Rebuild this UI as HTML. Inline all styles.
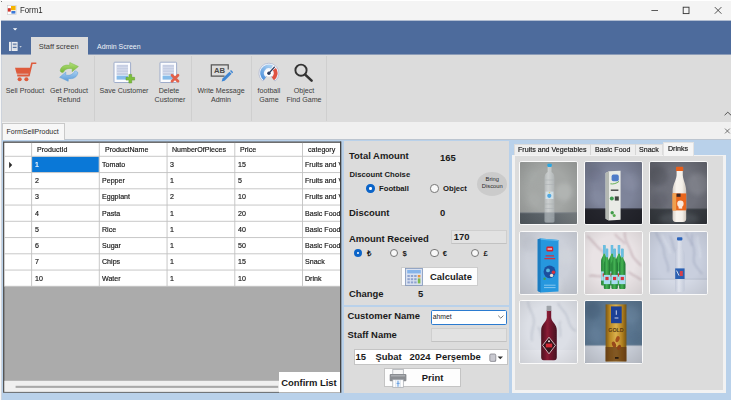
<!DOCTYPE html>
<html><head><meta charset="utf-8"><title>Form1</title>
<style>
*{box-sizing:border-box;margin:0;padding:0}
html,body{width:731px;height:400px;overflow:hidden}
body{position:relative;background:#b9d1ea;font-family:"Liberation Sans",sans-serif;color:#222}
.a{position:absolute;white-space:nowrap}
.t{position:absolute;white-space:nowrap;line-height:10px;height:10px}
.rb{font-size:7.5px;color:#3c3c3c;text-align:center;transform:translateX(-50%) scaleX(.947)}
.sep{position:absolute;top:56px;height:65px;width:1px;background:#cfcfcf}
.b{font-weight:bold;font-size:9.45px;color:#1a1a1a;line-height:12px;height:12px}
.sb{font-weight:bold;font-size:7.7px;color:#1a1a1a;line-height:10px;height:10px}
.g{font-size:7.7px;color:#111;-webkit-text-stroke:0.18px #222;line-height:10px;height:10px;transform:scaleX(.922);transform-origin:0 50%}
.radio{position:absolute;width:8.4px;height:8.4px;border-radius:50%;border:0.9px solid #777;background:#f8f8f8;margin:-0.2px}
.radio.on{border:3px solid #0b64c8;background:#fff}
.pic{position:absolute;width:59.2px;height:64px;border:1px solid #fafafa;border-radius:2.2px;overflow:hidden;background:#ccc}
.pic svg{position:absolute;left:0;top:0;width:57.2px;height:62px;display:block}
</style></head><body>

<div class="a" style="left:0;top:0;width:1.2px;height:400px;background:#f7f7f7;z-index:50"></div><div class="a" style="left:1.2px;top:54.5px;width:0.5px;height:345.5px;background:#cdd3dc;z-index:50"></div>
<!-- title bar -->
<div class="a" style="left:0;top:0;width:731px;height:21px;background:#f4f4f4;border-top:1px solid #fff;border-left:1px solid #fff"></div>
<svg class="a" style="left:7px;top:5px" width="10" height="10" viewBox="0 0 10 10">
 <rect x="0.5" y="0.5" width="8.6" height="8.8" fill="#fff" stroke="#c8c8c8" stroke-width="0.6"/>
 <rect x="4" y="1" width="4.6" height="4.2" fill="#f5b400"/>
 <rect x="0.8" y="3.2" width="3" height="3.4" fill="#d0342c"/>
 <rect x="4.4" y="6" width="4" height="2.6" fill="#3b78d8"/>
</svg>
<div class="t" style="left:19.8px;top:5.2px;font-size:8.7px;color:#2a2a2a;transform:scaleX(.9);transform-origin:0 50%">Form1</div><div class="a" style="left:1.2px;top:1.1px;width:1px;height:1px;background:#777;z-index:51"></div>
<svg class="a" style="left:645px;top:3px" width="82" height="15" viewBox="0 0 82 15">
 <path d="M6.4 7.5h6.6" stroke="#333" stroke-width="0.8" fill="none"/>
 <rect x="38.2" y="4.2" width="5.8" height="6.4" stroke="#333" stroke-width="0.9" fill="none"/>
 <path d="M69.8 4.1l6.6 6.6M76.4 4.1l-6.6 6.6" stroke="#333" stroke-width="0.85" fill="none"/>
</svg>

<!-- blue band -->
<div class="a" style="left:1px;top:20px;width:730px;height:1px;background:#b1bdd1"></div>
<div class="a" style="left:1px;top:20.6px;width:730px;height:33.9px;background:#4d6b9c"></div>
<svg class="a" style="left:12px;top:26px" width="8" height="6" viewBox="0 0 8 6"><path d="M0.900 2.300h4.400l-2.200 2.300z" fill="#fff"/></svg>
<svg class="a" style="left:8px;top:41px" width="16" height="11" viewBox="0 0 16 11">
 <rect x="1" y="0.900" width="8.600" height="9.100" fill="#e9ebef"/>
 <path d="M3.400 0.900v9.100" stroke="#5a76a4" stroke-width="0.700"/>
 <path d="M4.800 3.100h3.800M4.800 6.400h3.800" stroke="#5a76a4" stroke-width="1.100"/>
 <path d="M4.800 4.600h3.800M4.800 8h3.800" stroke="#c4cad6" stroke-width="0.700"/>
 <path d="M11.400 5.200h2.400l-1.200 1.300z" fill="#e9ebef"/>
</svg>
<div class="a" style="left:30.8px;top:36.8px;width:57.6px;height:18.4px;background:#dcdcdc;z-index:2"></div>
<div class="t" style="left:38.7px;top:42px;font-size:7.5px;color:#3a3a3a;z-index:3">Staff screen</div>
<div class="t" style="left:97px;top:42px;font-size:6.95px;color:#f0f3f8">Admin Screen</div>

<!-- ribbon -->
<div class="a" style="left:1px;top:54px;width:730px;height:68px;background:#dcdcdc;border-top:1px solid #8c9cb8"></div>
<div class="sep" style="left:94px"></div>
<div class="sep" style="left:191px"></div>
<div class="sep" style="left:251px"></div>
<div class="sep" style="left:326px"></div>
<div id="icons">
<!-- cart -->
<svg class="a" style="left:13px;top:61px" width="25" height="22" viewBox="0 0 25 22">
 <g fill="#de5b3c" stroke="none">
 <path d="M2 6.700h15.700l-1.600 6.100h-12.400z"/>
 <path d="M4 13.500h12l-.4 1.900h-11.200z"/>
 <circle cx="6.650" cy="18.200" r="2.050"/><circle cx="13.400" cy="18.200" r="2.050"/>
 </g>
 <path d="M15.800 15.300L18.900 2.300h4.400" fill="none" stroke="#de5b3c" stroke-width="1.600"/>
</svg>
<!-- refresh -->
<svg class="a" style="left:58px;top:61px" width="22" height="22" viewBox="0 0 22 22">
 <defs><linearGradient id="rg" x1="0" y1="0" x2="0" y2="1"><stop offset="0" stop-color="#b4e27a"/><stop offset="1" stop-color="#74b436"/></linearGradient>
 <linearGradient id="rb" x1="0" y1="0" x2="0" y2="1"><stop offset="0" stop-color="#a9d0f2"/><stop offset="1" stop-color="#5b9bd8"/></linearGradient></defs>
 <path d="M2.200 9.600c.6-4.200 5-6.400 9.400-5.200l.2-2.900 8.600 4-6.300 5.200 .2-2.800c-2.700-1-6.800-.6-9 3.400-.6.800-3.300-.2-3.100-1.700z" fill="url(#rg)" stroke="#7ab648" stroke-width="0.500"/>
 <path d="M19.800 12c-.6 4.200-5 6.600-9.400 5.400l-.2 2.900-8.600-4 6.300-5.200-.2 2.800c2.700 1 6.800.4 9-3.600.6-.8 3.300.2 3.100 1.700z" fill="url(#rb)" stroke="#5c9cd8" stroke-width="0.500"/>
</svg>
<!-- save customer -->
<svg class="a" style="left:113px;top:61px" width="23" height="23" viewBox="0 0 23 23">
 <rect x="1" y="1.200" width="16.600" height="20.300" rx="0.800" fill="#fbfcfe" stroke="#9fadcb" stroke-width="1"/>
 <rect x="3.600" y="3.800" width="11.400" height="10.200" fill="#c6cee3"/>
 <path d="M3.600 6.300h11.400M3.600 8.900h11.400M3.600 11.500h11.400" stroke="#e4e8f3" stroke-width="0.600"/>
 <rect x="3.600" y="14.600" width="11.400" height="4" fill="#86bcea"/>
 <path d="M15.900 13.400h2.800v2.900h2.900v2.800h-2.900v2.900h-2.800v-2.900h-2.900v-2.800h2.900z" fill="#7dc03c" stroke="#5c9a28" stroke-width="0.500"/>
</svg>
<!-- delete customer -->
<svg class="a" style="left:159px;top:61px" width="23" height="23" viewBox="0 0 23 23">
 <rect x="1" y="1.200" width="16.600" height="20.300" rx="0.800" fill="#fbfcfe" stroke="#9fadcb" stroke-width="1"/>
 <rect x="3.600" y="3.800" width="11.400" height="10.200" fill="#c6cee3"/>
 <path d="M3.600 6.300h11.400M3.600 8.900h11.400M3.600 11.500h11.400" stroke="#e4e8f3" stroke-width="0.600"/>
 <rect x="3.600" y="14.600" width="11.400" height="4" fill="#86bcea"/>
 <path d="M13 14.200l6 6M19 14.200l-6 6" stroke="#e2614b" stroke-width="2.700" stroke-linecap="round" fill="none"/>
</svg>
<!-- write message -->
<svg class="a" style="left:209.5px;top:62.8px" width="23.500" height="20.700" viewBox="0 0 25 22">
 <path d="M15.500 13.900h-14.100v-11.900h18v5" fill="none" stroke="#555" stroke-width="1.300"/>
 <text x="10.200" y="10.900" font-family="Liberation Sans, sans-serif" font-weight="bold" font-size="8.200" text-anchor="middle" fill="#4a4a4a">AB</text>
 <path d="M12.400 19.800l.9-3.200 7.400-7.400 2.300 2.300-7.400 7.400z" fill="#3e86d4"/>
 <path d="M21.300 8.600l1.100-1.100 2.300 2.300-1.100 1.100z" fill="#3e86d4"/>
</svg>
<!-- gauge -->
<svg class="a" style="left:258px;top:62px" width="22" height="22" viewBox="0 0 22 22">
 <defs><linearGradient id="gb1" x1="0" y1="1" x2="0.6" y2="0"><stop offset="0" stop-color="#3f88da"/><stop offset="1" stop-color="#a6cdf0"/></linearGradient></defs>
 <path d="M4.74 19.08A10 10 0 1 1 17.06 19.08L12.93 13.8A3.3 3.3 0 0 0 8.87 13.8z" fill="#f3f5fa" stroke="#a7b1cd" stroke-width="0.700"/>
 <path d="M5.79 18.24A8.7 8.7 0 0 1 14.98 3.52L13.2 6.87A4.9 4.9 0 0 0 8.02 15.16z" fill="url(#gb1)"/>
 <path d="M17.94 6.09A8.7 8.7 0 0 1 16.01 18.24L13.78 15.16A4.9 4.9 0 0 0 14.86 8.32z" fill="#df5241"/>
 <circle cx="10.9" cy="11.2" r="3.400" fill="#fff"/>
 <path d="M10.9 11.2L16.39 5.11" stroke="#2b3a5c" stroke-width="1.300" stroke-linecap="round"/>
 <circle cx="10.9" cy="11.2" r="1.700" fill="#2b3a5c"/>
</svg>
<!-- magnifier -->
<svg class="a" style="left:293px;top:62px" width="21" height="21" viewBox="0 0 21 21">
 <circle cx="8" cy="8.200" r="5.600" fill="none" stroke="#333" stroke-width="1.900"/>
 <path d="M12.200 12.600l6.400 6" stroke="#333" stroke-width="2.600" stroke-linecap="round"/>
</svg>
</div>

<div class="t rb" style="left:25px;top:85.5px">Sell Product</div>
<div class="t rb" style="left:68.5px;top:85.5px">Get Product</div>
<div class="t rb" style="left:68.5px;top:95.1px">Refund</div>
<div class="t rb" style="left:123.7px;top:85.5px">Save Customer</div>
<div class="t rb" style="left:169.3px;top:85.5px">Delete</div>
<div class="t rb" style="left:169.6px;top:95.1px">Customer</div>
<div class="t rb" style="left:221.3px;top:85.5px">Write Message</div>
<div class="t rb" style="left:221.3px;top:95.1px">Admin</div>
<div class="t rb" style="left:268.7px;top:85.5px">football</div>
<div class="t rb" style="left:268.5px;top:95.1px">Game</div>
<div class="t rb" style="left:303.7px;top:85.5px">Object</div>
<div class="t rb" style="left:303.5px;top:95.1px">Find Game</div>
<svg class="a" style="left:722px;top:109px" width="9" height="8" viewBox="0 0 9 8"><path d="M2.6 6.2l3.2-3 3.2 3" stroke="#444" stroke-width="0.9" fill="none"/></svg>

<!-- mdi tab strip -->
<div class="a" style="left:1px;top:122px;width:730px;height:17px;background:#f0f0f0"></div>
<div class="a" style="left:1px;top:139px;width:730px;height:0.8px;background:#bcc5d0"></div>
<div class="a" style="left:1.5px;top:123px;width:63px;height:16.5px;background:#f7f7f7;border:1px solid #c9c9c9;border-bottom:none"></div>
<div class="t" style="left:6.5px;top:126.8px;font-size:7px;color:#2a2a2a">FormSellProduct</div>
<svg class="a" style="left:722px;top:126px" width="9" height="9" viewBox="0 0 9 9"><path d="M3 2.6l4.8 4.8M7.8 2.6L3 7.4" stroke="#555" stroke-width="0.8" fill="none"/></svg>

<!-- GRID placeholder -->
<div class="a" style="left:3.0px;top:141.0px;width:339px;height:252px;overflow:hidden" id="grid">
<svg class="a" style="left:0;top:0" width="339" height="252" viewBox="0 0 339 252"><rect x="0.0" y="0.5" width="338.2" height="251.1" fill="#555"/><rect x="337.0" y="0.5" width="1.2" height="251.1" fill="#424242"/><rect x="0.0" y="250.8" width="338.2" height="0.8" fill="#6a6a6a"/><rect x="1.4" y="1.9" width="335.6" height="248.9" fill="#ababab"/><rect x="1.4" y="1.9" width="335.6" height="143.4" fill="#fff"/><rect x="29.05" y="15.75" width="66.8" height="15.35" fill="#0a78d7"/><path d="M1.4 15.3H337.0M1.4 31.55H337.0M1.4 47.8H337.0M1.4 64.05H337.0M1.4 80.3H337.0M1.4 96.55H337.0M1.4 112.8H337.0M1.4 129.05H337.0M1.4 145.3H337.0M28.6 1.9V145.3M96.3 1.9V145.3M164.05 1.9V145.3M231.8 1.9V145.3M299.5 1.9V145.3" stroke="#c2c2c2" stroke-width="0.9" fill="none"/><rect x="1.4" y="239.8" width="274.6" height="11.0" fill="#f0f0f0"/><rect x="12.6" y="244.8" width="262.6" height="2.1" fill="#a9a9a9"/><path d="M6.1 20.83L9.2 24.03L6.1 27.23z" fill="#2a2a2a"/></svg>
<div class="t g" style="left:34.0px;top:4.3px">ProductId</div>
<div class="t g" style="left:101.7px;top:4.3px">ProductName</div>
<div class="t g" style="left:169.45px;top:4.3px">NumberOfPieces</div>
<div class="t g" style="left:237.2px;top:4.3px">Price</div>
<div class="t g" style="left:304.9px;top:4.3px">category</div>
<div class="t g" style="left:31.5px;top:18.93px;color:#fff;-webkit-text-stroke-color:#fff">1</div>
<div class="t g" style="left:99.2px;top:18.93px">Tomato</div>
<div class="t g" style="left:166.95px;top:18.93px">3</div>
<div class="t g" style="left:234.7px;top:18.93px">15</div>
<div class="t g" style="left:302.4px;top:18.93px;width:37.53px;overflow:hidden">Fruits and Vegetables</div>
<div class="t g" style="left:31.5px;top:35.18px">2</div>
<div class="t g" style="left:99.2px;top:35.18px">Pepper</div>
<div class="t g" style="left:166.95px;top:35.18px">1</div>
<div class="t g" style="left:234.7px;top:35.18px">5</div>
<div class="t g" style="left:302.4px;top:35.18px;width:37.53px;overflow:hidden">Fruits and Vegetables</div>
<div class="t g" style="left:31.5px;top:51.43px">3</div>
<div class="t g" style="left:99.2px;top:51.43px">Eggplant</div>
<div class="t g" style="left:166.95px;top:51.43px">2</div>
<div class="t g" style="left:234.7px;top:51.43px">10</div>
<div class="t g" style="left:302.4px;top:51.43px;width:37.53px;overflow:hidden">Fruits and Vegetables</div>
<div class="t g" style="left:31.5px;top:67.68px">4</div>
<div class="t g" style="left:99.2px;top:67.68px">Pasta</div>
<div class="t g" style="left:166.95px;top:67.68px">1</div>
<div class="t g" style="left:234.7px;top:67.68px">20</div>
<div class="t g" style="left:302.4px;top:67.68px;width:37.53px;overflow:hidden">Basic Food</div>
<div class="t g" style="left:31.5px;top:83.93px">5</div>
<div class="t g" style="left:99.2px;top:83.93px">Rice</div>
<div class="t g" style="left:166.95px;top:83.93px">1</div>
<div class="t g" style="left:234.7px;top:83.93px">40</div>
<div class="t g" style="left:302.4px;top:83.93px;width:37.53px;overflow:hidden">Basic Food</div>
<div class="t g" style="left:31.5px;top:100.18px">6</div>
<div class="t g" style="left:99.2px;top:100.18px">Sugar</div>
<div class="t g" style="left:166.95px;top:100.18px">1</div>
<div class="t g" style="left:234.7px;top:100.18px">50</div>
<div class="t g" style="left:302.4px;top:100.18px;width:37.53px;overflow:hidden">Basic Food</div>
<div class="t g" style="left:31.5px;top:116.43px">7</div>
<div class="t g" style="left:99.2px;top:116.43px">Chips</div>
<div class="t g" style="left:166.95px;top:116.43px">1</div>
<div class="t g" style="left:234.7px;top:116.43px">15</div>
<div class="t g" style="left:302.4px;top:116.43px;width:37.53px;overflow:hidden">Snack</div>
<div class="t g" style="left:31.5px;top:132.68px">10</div>
<div class="t g" style="left:99.2px;top:132.68px">Water</div>
<div class="t g" style="left:166.95px;top:132.68px">1</div>
<div class="t g" style="left:234.7px;top:132.68px">10</div>
<div class="t g" style="left:302.4px;top:132.68px;width:37.53px;overflow:hidden">Drink</div>
</div>
<div class="a" style="left:279px;top:372px;width:61px;height:20.7px;background:#fff;border-bottom:0.8px solid #b4b4b4"></div>
<div class="t b" style="left:281.2px;top:376.9px">Confirm List</div>
<!-- MID placeholder -->
<div id="mid">
<!-- panel 1 -->
<div class="a" style="left:344.1px;top:140.5px;width:165.2px;height:164px;background:#dcdcdc"></div>
<div class="t b" style="left:349px;top:149.8px">Total Amount</div>
<div class="t b" style="left:440px;top:151.6px">165</div>
<div class="t sb" style="left:349.5px;top:169.6px">Discount Choise</div>
<div class="radio on" style="left:366.5px;top:184.4px"></div>
<div class="t sb" style="left:379px;top:184.1px">Football</div>
<div class="radio" style="left:430.5px;top:184.4px"></div>
<div class="t sb" style="left:443px;top:184.1px">Object</div>
<div class="a" style="left:476.8px;top:172.2px;width:30.4px;height:23.8px;border-radius:50%;background:#cbcbcb"></div>
<div class="t" style="left:492.3px;top:176.9px;font-size:5.8px;color:#2a2a2a;text-align:center;transform:translateX(-50%);line-height:5px;height:5px">Bring</div>
<div class="t" style="left:492.3px;top:184.1px;font-size:5.8px;color:#2a2a2a;text-align:center;transform:translateX(-50%);line-height:5px;height:5px">Discoun</div>
<div class="t b" style="left:349px;top:206.6px">Discount</div>
<div class="t b" style="left:440px;top:206.6px">0</div>
<div class="t b" style="left:349px;top:232.8px">Amount Received</div>
<div class="a" style="left:451px;top:230px;width:56.3px;height:14px;background:#e2e2e2;border:1px solid #cfcfcf;border-bottom-color:#c2c2c2"></div>
<div class="t b" style="left:453.8px;top:230.8px">170</div>
<div class="radio on" style="left:354px;top:249px"></div>
<div class="t sb" style="left:366.6px;top:249.2px">₺</div>
<div class="radio" style="left:390px;top:249px"></div>
<div class="t sb" style="left:402.6px;top:249.2px">$</div>
<div class="radio" style="left:430.5px;top:249px"></div>
<div class="t sb" style="left:442.8px;top:249.2px">€</div>
<div class="radio" style="left:471px;top:249px"></div>
<div class="t sb" style="left:483.4px;top:249.2px">£</div>
<!-- calculate -->
<div class="a" style="left:401px;top:267px;width:76.5px;height:18.6px;background:#fdfdfd;border:1px solid #cdcdcd"></div>
<svg class="a" style="left:404.5px;top:267.5px" width="18" height="18" viewBox="0 0 18 18">
 <rect x="0.5" y="0.5" width="17" height="17" fill="#d9e1f0" stroke="#7f94b8" stroke-width="0.8"/>
 <rect x="2.2" y="2" width="13.6" height="3.4" fill="#86b4ea"/>
 <g fill="#8fa3cf">
 <rect x="2.4" y="7" width="2.4" height="2"/><rect x="5.8" y="7" width="2.4" height="2"/><rect x="9.2" y="7" width="2.4" height="2"/>
 <rect x="2.4" y="10.2" width="2.4" height="2"/><rect x="5.8" y="10.2" width="2.4" height="2"/><rect x="9.2" y="10.2" width="2.4" height="2"/>
 <rect x="2.4" y="13.4" width="2.4" height="2"/><rect x="5.8" y="13.4" width="2.4" height="2"/><rect x="9.2" y="13.4" width="2.4" height="2"/>
 </g>
 <rect x="12.8" y="7" width="2.6" height="2.4" fill="#e8953a"/><rect x="12.8" y="10.4" width="2.6" height="5" fill="#7fba4c"/>
</svg>
<div class="t b" style="left:430px;top:270.6px">Calculate</div>
<div class="t b" style="left:349px;top:287.8px">Change</div>
<div class="t b" style="left:418px;top:287.8px">5</div>
<!-- panel 2 -->
<div class="a" style="left:344.1px;top:306.5px;width:165.2px;height:86.2px;background:#dcdcdc"></div>
<div class="t b" style="left:347.5px;top:309.6px">Customer Name</div>
<div class="a" style="left:430.8px;top:310px;width:76.5px;height:14.6px;background:#fff;border:1px solid #2b7bd0;border-radius:1.6px"></div>
<div class="t" style="left:432.8px;top:312.4px;font-size:6.8px;color:#222">ahmet</div>
<svg class="a" style="left:497px;top:314px" width="8" height="6" viewBox="0 0 8 6"><path d="M1.2 1.6l2.6 2.6 2.6-2.6" stroke="#555" stroke-width="0.8" fill="none"/></svg>
<div class="t b" style="left:347.5px;top:328.5px">Staff Name</div>
<div class="a" style="left:431px;top:328px;width:76.3px;height:14px;background:#e2e2e2;border:1px solid #cfcfcf;border-bottom-color:#c2c2c2"></div>
<!-- date -->
<div class="a" style="left:354px;top:349.3px;width:153.5px;height:16px;background:#fff;border:1px solid #c4c4c4"></div>
<div class="t b" style="left:355.6px;top:350.9px">15</div>
<div class="t b" style="left:375.4px;top:350.9px">Şubat</div>
<div class="t b" style="left:409.6px;top:350.9px">2024</div>
<div class="t b" style="left:435.6px;top:350.9px">Perşembe</div>
<svg class="a" style="left:488.5px;top:352.5px" width="17" height="10" viewBox="0 0 17 10">
 <rect x="0.8" y="1" width="6" height="7.4" rx="1.2" fill="#c9c9d0" stroke="#85858d" stroke-width="0.8"/>
 <path d="M5.2 8.4l1.6-1.8v1.8z" fill="#8a8a92"/>
 <path d="M8.6 3.4h5.4l-2.700 2.800z" fill="#333"/>
</svg>
<!-- print -->
<div class="a" style="left:384.2px;top:368.2px;width:76.6px;height:18.7px;background:#fdfdfd;border:1px solid #c4c4c4"></div>
<svg class="a" style="left:388.5px;top:368.5px" width="18" height="19" viewBox="0 0 18 19">
 <rect x="3.800" y="0.400" width="10.500" height="5" fill="#f6f6f6" stroke="#a4a8ae" stroke-width="0.700"/>
 <rect x="0.700" y="4.900" width="16.700" height="7.400" rx="1" fill="#8a8d91"/>
 <rect x="2" y="6" width="14" height="1.500" fill="#a9acb0"/>
 <rect x="3.800" y="10.700" width="10.500" height="7.600" fill="#fff" stroke="#a4a8ae" stroke-width="0.700"/>
 <path d="M6.800 11v7M11.300 11v7" stroke="#b9c4d4" stroke-width="0.500"/>
 <rect x="8" y="11.600" width="2.200" height="6.200" fill="#a8c8ee"/>
 <path d="M7.600 14.400h3" stroke="#5f9bde" stroke-width="0.900"/>
</svg>
<div class="t b" style="left:421.8px;top:371.8px">Print</div>
</div>

<!-- RIGHT placeholder -->
<div id="right">
<!-- tab control -->
<div class="a" style="left:512.3px;top:155.2px;width:214px;height:237.7px;background:#dcdcdc;border:3px solid #f2f2f2;border-top-width:1.6px"></div>
<!-- tab headers -->
<div class="a" style="left:513.6px;top:143.6px;width:149.4px;height:11.8px;background:#eeeeee;border:0.8px solid #dcdcdc;border-bottom:none"></div>
<div class="a" style="left:590.2px;top:144px;width:0.8px;height:11.4px;background:#d6d6d6"></div>
<div class="a" style="left:634.6px;top:144px;width:0.8px;height:11.4px;background:#d6d6d6"></div>
<div class="a" style="left:662.8px;top:141.6px;width:30.8px;height:14.6px;background:#f5f5f5;border:0.8px solid #e2e2e2;border-bottom:none"></div>
<div class="t g" style="left:518px;top:144.9px">Fruits and Vegetables</div>
<div class="t g" style="left:594.5px;top:144.9px">Basic Food</div>
<div class="t g" style="left:638.6px;top:144.9px">Snack</div>
<div class="t g" style="left:667.6px;top:144px">Drinks</div>
<!-- PICS -->
<div id="pics">
<svg width="0" height="0" style="position:absolute"><defs>
<filter id="bl" x="-10%" y="-10%" width="120%" height="120%"><feGaussianBlur stdDeviation="0.45"/></filter>
<filter id="bl2" x="-10%" y="-10%" width="120%" height="120%"><feGaussianBlur stdDeviation="0.9"/></filter>
<filter id="bl3" x="-20%" y="-20%" width="140%" height="140%"><feGaussianBlur stdDeviation="2.2"/></filter>
<radialGradient id="vig" cx="50%" cy="45%" r="75%"><stop offset="0.45" stop-color="#000" stop-opacity="0"/><stop offset="1" stop-color="#000" stop-opacity="0.28"/></radialGradient>
<radialGradient id="vigl" cx="50%" cy="45%" r="75%"><stop offset="0.5" stop-color="#000" stop-opacity="0"/><stop offset="1" stop-color="#000" stop-opacity="0.1"/></radialGradient>
<linearGradient id="fl1" x1="0" x2="1"><stop offset="0" stop-color="#596167"/><stop offset="0.5" stop-color="#5f676d"/><stop offset="1" stop-color="#82888b"/></linearGradient>
<linearGradient id="gold" x1="0" x2="1" y1="0" y2="0"><stop offset="0" stop-color="#7a5612"/><stop offset="0.2" stop-color="#b98824"/><stop offset="0.5" stop-color="#dab04c"/><stop offset="0.8" stop-color="#b08020"/><stop offset="1" stop-color="#76520f"/></linearGradient>
<linearGradient id="milk" x1="0" x2="1"><stop offset="0" stop-color="#d9d1c8"/><stop offset="0.3" stop-color="#f8f4ee"/><stop offset="0.7" stop-color="#f4efe8"/><stop offset="1" stop-color="#cfc6bc"/></linearGradient>
<linearGradient id="wat" x1="0" x2="1"><stop offset="0" stop-color="#bfc4c6"/><stop offset="0.35" stop-color="#e4e7e8"/><stop offset="0.65" stop-color="#d2d6d8"/><stop offset="1" stop-color="#b4babd"/></linearGradient>
<linearGradient id="red" x1="0" x2="1"><stop offset="0" stop-color="#4a1020"/><stop offset="0.4" stop-color="#8a1c34"/><stop offset="1" stop-color="#451020"/></linearGradient>
<linearGradient id="grn" x1="0" x2="1"><stop offset="0" stop-color="#1f7a34"/><stop offset="0.45" stop-color="#45b454"/><stop offset="1" stop-color="#1d7230"/></linearGradient>
<linearGradient id="gls" x1="0" x2="1"><stop offset="0" stop-color="#b9c0d2"/><stop offset="0.4" stop-color="#e6e9f1"/><stop offset="1" stop-color="#bcc3d4"/></linearGradient>
</defs></svg>

<!-- 1 water bottle -->
<div class="pic" style="left:519px;top:161px"><svg viewBox="0 0 57.2 62" preserveAspectRatio="none">
<rect width="57.2" height="62" fill="#a4a7a5"/>
<g filter="url(#bl3)" opacity="0.5"><circle cx="12" cy="14" r="7" fill="#a6aaa8"/><circle cx="44" cy="30" r="9" fill="#bec1bf"/><circle cx="14" cy="38" r="8" fill="#aaaeac"/></g>
<rect y="50.6" width="57.2" height="11.4" fill="url(#fl1)"/>
<rect y="50.2" width="57.2" height="1" fill="#8b9194" filter="url(#bl)"/>
<rect width="57.2" height="62" fill="url(#vig)" opacity="0.6"/>
<g filter="url(#bl)">
<path d="M27.6 4.6h4v5.4c2.4 1.6 2.8 3.4 2.8 6v42.8c0 1.2-.6 1.8-1.8 1.8h-6.2c-1.2 0-1.8-.6-1.8-1.8V16c0-2.6.6-4.400 3-6z" fill="url(#wat)" opacity="0.62"/>
<path d="M25 18h9M25 22.500h9M25 42h9M25 46.500h9M25 51h9M25 55.500h9" stroke="#aab0b3" stroke-width="0.7" opacity="0.8"/>
<rect x="24.6" y="50.6" width="9.800" height="9.600" fill="#8e979c" opacity="0.55"/>
<rect x="27.400" y="1.700" width="4.400" height="3.200" rx="0.8" fill="#2aa7e2"/>
<rect x="25.600" y="29.600" width="7.800" height="7.400" fill="#d6e8f2" opacity="0.8"/>
<circle cx="29.3" cy="33.8" r="2.100" fill="#4fa8e2"/>
<circle cx="29.5" cy="30.6" r="0.8" fill="#d8cf7a"/>
</g>
</svg></div>

<!-- 2 milk carton -->
<div class="pic" style="left:584px;top:161px"><svg viewBox="0 0 57.2 62" preserveAspectRatio="none">
<rect width="57.2" height="62" fill="#7e849a"/>
<g filter="url(#bl3)" opacity="0.55"><circle cx="10" cy="12" r="8" fill="#6f758c"/><circle cx="46" cy="20" r="9" fill="#8a90a6"/><circle cx="12" cy="36" r="8" fill="#888ea4"/></g>
<rect y="46.600" width="57.2" height="15.400" fill="#26272f"/>
<rect y="46.200" width="57.2" height="1" fill="#4a4d5c" filter="url(#bl)"/>
<rect width="57.2" height="62" fill="url(#vig)" opacity="0.8"/>
<g filter="url(#bl)">
<path d="M20.600 11l3.400-1.800 11.600 -0.400v49l-11.600 .7-3.400-1.700z" fill="#e9ebe6"/>
<path d="M20.600 11l3.400-1.800v49.300l-3.400-1.700z" fill="#b4b8b2"/>
<rect x="26.600" y="12.600" width="7.200" height="6.600" rx="1.800" fill="#4f7cc8"/>
<path d="M25.400 21.800c3 .6 6-.4 8.600-2.400" stroke="#58a848" stroke-width="0.9" fill="none"/>
<path d="M25.800 28.200h7.600" stroke="#4a4f4a" stroke-width="1.500"/>
<circle cx="26.800" cy="36.400" r="2" fill="#3d9a50"/>
<path d="M29.800 34.400h4v4.200h-4z" fill="#40443f"/>
<circle cx="27.200" cy="50.800" r="1.700" fill="#3f9a4a"/><circle cx="29.200" cy="53.600" r="1.500" fill="#58ae50"/>
</g>
</svg></div>

<!-- 3 ayran bottle -->
<div class="pic" style="left:649px;top:161px"><svg viewBox="0 0 57.2 62" preserveAspectRatio="none">
<rect width="57.2" height="62" fill="#6f717b"/>
<g filter="url(#bl3)" opacity="0.7"><circle cx="8" cy="14" r="10" fill="#585a64"/><circle cx="48" cy="22" r="11" fill="#84868f"/><circle cx="10" cy="38" r="8" fill="#62646e"/></g>
<rect y="46.600" width="57.2" height="15.400" fill="#3b3f45"/>
<ellipse cx="29" cy="57" rx="20" ry="6" fill="#50555b" filter="url(#bl3)"/>
<rect y="46.200" width="57.2" height="1" fill="#5c6068" filter="url(#bl)"/>
<rect width="57.2" height="62" fill="url(#vig)" opacity="0.9"/>
<g filter="url(#bl)">
<path d="M26.600 8.600h6.200v4.600c.4 5.400 3.400 9.400 3.400 15.800v27.800c0 2-1 3.200-3 3.200h-7.600c-2 0-3-1.200-3-3.200V29c0-6.400 3.600-10.400 4-15.800z" fill="url(#milk)"/>
<rect x="26" y="4.800" width="7.300" height="4.300" rx="0.9" fill="#e8601c"/>
<rect x="22.600" y="31.400" width="13.600" height="17" fill="#e9661f"/>
<rect x="22.600" y="31.400" width="3.600" height="17" fill="#f0a04e"/>
<rect x="26.600" y="31.600" width="4" height="3.200" fill="#3a2626"/>
<circle cx="30.400" cy="41.800" r="3.200" fill="#fbe9dc"/>
<rect x="28.600" y="43" width="3.600" height="3.600" fill="#fbe9dc"/>
</g>
</svg></div>

<!-- 4 blue box -->
<div class="pic" style="left:519px;top:230.6px"><svg viewBox="0 0 57.2 62" preserveAspectRatio="none">
<rect width="57.2" height="62" fill="#ccd0d9"/>
<g filter="url(#bl3)" opacity="0.5"><circle cx="10" cy="12" r="8" fill="#bcc0ca"/><circle cx="46" cy="24" r="9" fill="#d2d5dc"/><circle cx="28" cy="56" r="14" fill="#d8dbe1"/></g>
<rect width="57.2" height="62" fill="url(#vigl)"/>
<g filter="url(#bl)">
<path d="M17.700 7.200l3-0.800 17.800 1.600v51.600l-17.800 1-3-1.600z" fill="#2597de"/>
<path d="M17.700 7.200l3-0.800v54.200l-3-1.600z" fill="#1b7cc0"/>
<path d="M20.700 6.400l17.800 1.600v1.200l-17.800-1.400z" fill="#56b4ea"/>
<rect x="26.400" y="14.600" width="6.800" height="4.800" rx="1.200" fill="#d9222c"/>
<path d="M27.600 17h4.400" stroke="#fff" stroke-width="1.100"/>
<path d="M25.600 23.800h8.400M24.400 26.600h10.800" stroke="#d8323a" stroke-width="1.300"/>
<ellipse cx="29.600" cy="39.800" rx="6" ry="6.400" fill="#1f4f9e"/>
<circle cx="33.400" cy="40.200" r="1.700" fill="#d8323a"/><circle cx="31.600" cy="43.400" r="1.700" fill="#e8e0d6"/><circle cx="28" cy="38.400" r="1.900" fill="#58b8e0"/>
<circle cx="24.600" cy="46.800" r="1.200" fill="#3fa050"/>
<path d="M24 53.200h11.600M24 55.600h11.600" stroke="#9fd2f2" stroke-width="0.8"/>
</g>
</svg></div>

<!-- 5 green bottles -->
<div class="pic" style="left:584px;top:230.6px"><svg viewBox="0 0 57.2 62" preserveAspectRatio="none">
<rect width="57.2" height="62" fill="#e9e3e5"/>
<g filter="url(#bl2)" fill="none" stroke="#bfa9b0" stroke-width="1.300" opacity="0.95">
<path d="M2 4c6 4 8 10 14 14s6 10 4 16"/><path d="M40 0c-2 8 4 12 6 20s8 10 10 14"/><path d="M30 2c2 4 8 6 10 10"/><path d="M4 44c6-2 10 2 14 0"/><path d="M44 40c4 4 8 4 12 8"/>
</g>
<rect width="57.2" height="62" fill="url(#vigl)"/>
<defs><g id="gb"><path d="M-1 0h2v9c.3 2.400 2.200 3.400 2.200 6.200v23.300c0 1-.5 1.500-1.500 1.500h-3.400c-1 0-1.500-.5-1.500-1.500V15.200c0-2.800 1.900-3.800 2.200-6.200z" fill="url(#grn)"/><rect x="-1.300" y="-0.500" width="2.600" height="8.800" rx="0.500" fill="#69bde2"/><rect x="-3.200" y="26" width="6.400" height="9.200" fill="#a6dcf0"/><rect x="-1.600" y="28" width="3.200" height="3.200" fill="#d8323a"/></g></defs>
<g filter="url(#bl)">
<use href="#gb" x="19.300" y="13.400"/><use href="#gb" x="27" y="13.400"/><use href="#gb" x="34" y="13.400"/>
<use href="#gb" x="22" y="16.900"/><use href="#gb" x="29.600" y="16.900"/><use href="#gb" x="37.300" y="16.900"/>
</g>
</svg></div>

<!-- 6 clear glass bottle -->
<div class="pic" style="left:649px;top:230.6px"><svg viewBox="0 0 57.2 62" preserveAspectRatio="none">
<rect width="57.2" height="62" fill="#c9cfde"/>
<g filter="url(#bl2)" fill="none" stroke="#a9b1c6" stroke-width="1.400" opacity="0.95">
<path d="M6 0c2 8 8 12 8 20s6 12 4 20"/><path d="M42 2c-2 8 4 14 2 22s4 12 8 18"/><path d="M20 4c4 6 2 12 6 16"/><path d="M36 0c0 6 6 8 6 14"/>
</g>
<g filter="url(#bl2)" fill="none" stroke="#dde2ec" stroke-width="1.200" opacity="0.9"><path d="M12 2c2 8 8 12 8 20"/><path d="M48 4c-2 8 4 14 2 22"/></g>
<rect y="47" width="57.2" height="15" fill="#d4d9e5"/>
<rect y="46.600" width="57.2" height="1" fill="#b9c0d0" filter="url(#bl)"/>
<rect width="57.2" height="62" fill="url(#vigl)"/>
<g filter="url(#bl)">
<path d="M27.400 8h4.600v8.600c2 2 2.600 3.600 2.600 6.400v35c0 1.300-.7 2-2 2h-5.600c-1.300 0-2-.7-2-2V23c0-2.800.6-4.400 2.400-6.400z" fill="url(#gls)" opacity="0.7"/>
<rect x="27" y="5.200" width="5.400" height="3.200" rx="0.800" fill="#2b63ba"/>
<rect x="25.200" y="36.400" width="9.400" height="10.600" fill="#2c60b2"/>
<rect x="29.800" y="39" width="3" height="5" fill="#d8404a"/>
<path d="M26.600 38.600l2.400 5" stroke="#e8ecf4" stroke-width="0.900"/>
</g>
</svg></div>

<!-- 7 red bottle -->
<div class="pic" style="left:519px;top:300.4px"><svg viewBox="0 0 57.2 62" preserveAspectRatio="none">
<rect width="57.2" height="62" fill="#dcdfe6"/>
<g filter="url(#bl2)" fill="none" stroke="#b9bfcb" stroke-width="1.300" opacity="0.95">
<path d="M8 0c0 8 6 12 6 20s-4 12-2 20"/><path d="M38 2c2 6 8 8 10 16s4 10 8 12"/><path d="M40 20c-2 6 2 10 0 16"/><path d="M18 26c4 4 2 10 6 14"/>
</g>
<rect y="49" width="57.2" height="13" fill="#e3e5eb"/>
<rect width="57.2" height="62" fill="url(#vigl)"/>
<g filter="url(#bl)">
<path d="M26.800 9h4.400v7.600c.4 5 5.600 6.400 5.600 12.600v27.400c0 1.700-.9 2.600-2.600 2.600h-10.400c-1.700 0-2.600-.9-2.600-2.600v-27.400c0-6.200 5.200-7.600 5.600-12.600z" fill="url(#red)"/>
<rect x="26.600" y="4.800" width="4.800" height="5.200" rx="0.700" fill="#9ea2a8"/>
<path d="M29 36.200l6.400 8.200-6.400 8.400-6.400-8.400z" fill="#35121e" stroke="#e6dfe0" stroke-width="0.800"/>
<rect x="25.800" y="42.600" width="6.400" height="3.800" fill="#d62a34"/>
<circle cx="29" cy="40.200" r="1" fill="#e8e0e0"/>
</g>
</svg></div>

<!-- 8 gold coffee -->
<div class="pic" style="left:584px;top:300.4px"><svg viewBox="0 0 57.2 62" preserveAspectRatio="none">
<rect width="57.2" height="62" fill="#5c7791"/>
<g filter="url(#bl3)" opacity="0.6"><circle cx="8" cy="10" r="9" fill="#4a647e"/><circle cx="46" cy="14" r="9" fill="#6a859f"/><circle cx="10" cy="34" r="8" fill="#66819b"/><circle cx="50" cy="36" r="7" fill="#53708a"/></g>
<rect y="44.400" width="57.2" height="17.600" fill="#ccd1db"/>
<rect y="43.900" width="57.2" height="1.200" fill="#93a2b4" filter="url(#bl)"/>
<rect width="57.2" height="62" fill="url(#vig)" opacity="0.5"/>
<g filter="url(#bl)">
<rect x="20.600" y="3.400" width="20.800" height="57" fill="url(#gold)"/>
<rect x="20.600" y="46" width="20.800" height="14.400" fill="#5e3414" opacity="0.7"/>
<rect x="26" y="5.400" width="10.700" height="16.800" fill="#1f3f96"/>
<path d="M29.600 17h3.800M31.300 9.400v4.400" stroke="#dfe5f4" stroke-width="0.9"/>
<ellipse cx="32.600" cy="38.200" rx="1.900" ry="3.200" fill="#a4501e" transform="rotate(20 32.600 38.200)"/>
<ellipse cx="29" cy="43.600" rx="1.900" ry="3.100" fill="#98481a" transform="rotate(-25 29 43.600)"/>
<ellipse cx="34" cy="46.400" rx="1.800" ry="2.800" fill="#8c4218" transform="rotate(30 34 46.400)"/>
<rect x="30" y="56" width="3.600" height="1.800" fill="#2a1a10"/>
</g>
<text x="31" y="31.400" font-family="Liberation Sans, sans-serif" font-weight="bold" font-size="6" text-anchor="middle" fill="#553710" textLength="15.400" lengthAdjust="spacingAndGlyphs">GOLD</text>
</svg></div>
</div>

</div>


</body></html>
